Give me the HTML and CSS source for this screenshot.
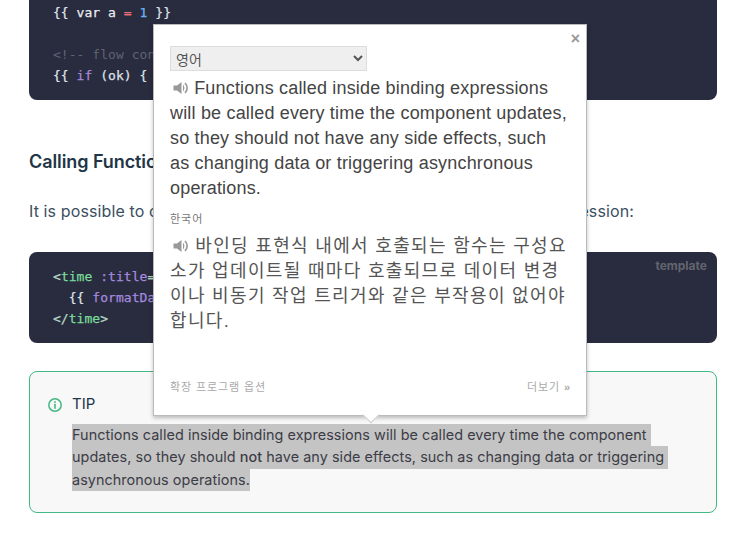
FILE: index.html
```html
<!DOCTYPE html>
<html lang="ko">
<head>
<meta charset="utf-8">
<title>Calling Functions</title>
<link rel="stylesheet" href="styles.css">
</head>
<body>
<main class="doc">
  <pre class="code code-top"><code>{{ <span class="kw-plain">var a</span> <span class="op">=</span> <span class="num">1</span> }}

<span class="comment">&lt;!-- flow control --&gt;</span>
{{ <span class="kw">if</span> (ok) { <span class="kw-plain">return message</span> } }}</code></pre>

  <h3 class="heading">Calling Functions</h3>
  <p class="para">It is possible to call a component-exposed method inside a binding expression:</p>

  <div class="code-wrap">
    <span class="lang">template</span>
    <pre class="code code-low"><code><span class="br">&lt;</span><span class="tag">time</span> <span class="kw">:title</span><span class="br">=</span><span class="str">"toTitleDate(date)"</span> <span class="kw">:datetime</span><span class="br">=</span><span class="str">"date"</span><span class="br">&gt;</span>
  {{ <span class="kw">formatDate</span>(date) }}
<span class="br">&lt;/</span><span class="tag">time</span><span class="br">&gt;</span></code></pre>
  </div>

  <aside class="tip">
    <svg class="tip-icon" width="14" height="14" viewBox="0 0 14 14" aria-hidden="true">
      <circle cx="7" cy="7" r="6.200" fill="none" stroke="#42b883" stroke-width="1.500"/>
      <rect x="6.200" y="3.200" width="1.600" height="1.600" fill="#42b883"/>
      <rect x="6.200" y="5.800" width="1.600" height="5" fill="#42b883"/>
    </svg>
    <div class="tip-body">
      <p class="tip-title">TIP</p>
      <p class="tip-text">
        <span class="sel sel-pad">Functions called inside binding expressions will be called every time the component</span>
        <span class="sel sel-pad">updates, so they should <strong class="strong">not</strong> have any side effects, such as changing data or triggering</span>
        <span class="sel">asynchronous operations.</span>
      </p>
    </div>
  </aside>
</main>

<section class="popup">
  <button class="close" type="button">×</button>
  <select class="lang-select"><option>영어</option></select>
  <p class="src">
    <svg class="speaker" width="16" height="14" viewBox="0 0 16 14" aria-hidden="true">
      <path d="M0.500 4.500h3.500L8.500 1v12L4 9.500H0.500z" fill="#999"/>
      <path d="M10 3.500c1.900 1.900 1.900 5.100 0 7z" fill="#999"/>
      <path d="M12 2c2.800 2.900 2.800 7.100 0 10" fill="none" stroke="#999" stroke-width="1.700"/>
    </svg>
    Functions called inside binding expressions will be called every time the component updates, so they should not have any side effects, such as changing data or triggering asynchronous operations.
  </p>
  <p class="target-label">한국어</p>
  <p class="target">
    <svg class="speaker" width="16" height="14" viewBox="0 0 16 14" aria-hidden="true">
      <path d="M0.500 4.500h3.500L8.500 1v12L4 9.500H0.500z" fill="#999"/>
      <path d="M10 3.500c1.900 1.900 1.900 5.100 0 7z" fill="#999"/>
      <path d="M12 2c2.800 2.900 2.800 7.100 0 10" fill="none" stroke="#999" stroke-width="1.700"/>
    </svg>
    바인딩 표현식 내에서 호출되는 함수는 구성요소가 업데이트될 때마다 호출되므로 데이터 변경이나 비동기 작업 트리거와 같은 부작용이 없어야 합니다.
  </p>
  <footer class="popup-foot">
    <span>확장 프로그램 옵션</span>
    <span>더보기 <span class="more">»</span></span>
  </footer>
  <span class="arrow"></span>
</section>
</body>
</html>
```
FILE: styles.css
```css
html, body { margin: 0; padding: 0; background: #fff; }
body {
  position: relative;
  height: 538px;
  overflow: hidden;
  font-family: Inter, "Noto Sans CJK KR", sans-serif;
  color: #213547;
}
.doc { padding: 0 29px; display: flex; flex-direction: column; }

.code {
  margin: 0;
  background: #292b3e;
  color: #dfe2ea;
  font: 13px/21px "DejaVu Sans Mono", monospace;
  letter-spacing: 0.04px;
  -webkit-text-stroke: 0.25px currentColor;
  padding: 14px 24px;
  border-radius: 8px;
  overflow: hidden;
}
.code code { font: inherit; }
.code-top { padding-top: 2px; padding-bottom: 14px; border-radius: 0 0 8px 8px; height: 84px; }
.code-low { height: 63px; }
.kw-plain { color: #eceef3; }
.op { color: #f07178; }
.num { color: #6cb0f0; }
.comment { color: #5f6474; -webkit-text-stroke: 0; }
.kw { color: #a58adf; }
.br { color: #b5d6c4; }
.tag { color: #79dc9b; }
.str { color: #a8d8a0; }

.heading {
  margin: 49px 0 0;
  font-size: 18px;
  line-height: 26px;
  font-weight: 600;
  letter-spacing: -0.08px;
}
.para {
  margin: 23px 0 0;
  font-size: 16px;
  line-height: 26px;
  letter-spacing: 0.115px;
  color: #3c4f5f;
}
.code-wrap { position: relative; margin-top: 28px; }
.lang {
  position: absolute;
  z-index: 1;
  top: 6px;
  right: 10px;
  font-size: 12px;
  line-height: 16px;
  font-weight: 700;
  color: #63656f;
}

.tip {
  margin-top: 28px;
  height: 140px;
  border: 1px solid #42b883;
  border-radius: 8px;
  background: #f8f8f8;
  display: flex;
  gap: 10px;
  padding: 0 0 0 18px;
}
.tip-icon { margin-top: 26px; flex: none; }
.tip-body { padding-top: 20px; }
.tip-title { margin: 0 0 8px; font-size: 15px; line-height: 24px; color: #213547; }
.tip-text { margin: 0; font-size: 14.4px; letter-spacing: 0.06px; line-height: 22.4px; color: #3c3c46; }
.sel { display: block; width: fit-content; background: #c4c4c4; white-space: nowrap; }
.sel-pad { padding-right: 4px; }
.strong { font-weight: 500; }

.popup {
  position: absolute;
  left: 153px;
  top: 24px;
  width: 399px;
  height: 349px;
  padding: 21px 17px 20px 16px;
  display: flex;
  flex-direction: column;
  background: #fff;
  border: 1px solid #bbb;
  box-shadow: 0 2px 4px rgba(0, 0, 0, 0.25);
  font-family: "Liberation Sans", "Noto Sans CJK KR", sans-serif;
  color: #444;
}
.close {
  position: absolute;
  top: 6px;
  right: 6px;
  padding: 0;
  border: 0;
  background: none;
  color: #999;
  font: bold 16px/16px "Liberation Sans", sans-serif;
}
.lang-select {
  width: 197px;
  height: 25px;
  flex: none;
  padding: 0 1px;
  border: 1px solid #ddd;
  border-radius: 0;
  background: #efefef;
  color: #555;
  font: 14px "Noto Sans CJK KR", sans-serif;
}
.src, .target { margin: 0; font-size: 18px; line-height: 25px; }
.src { margin-top: 5px; letter-spacing: 0.18px; }
.speaker { vertical-align: -1px; margin: 0 0 0 3px; }
.target-label { margin: 10px 0 0; font-size: 11px; line-height: 16px; letter-spacing: 1px; color: #777; }
.target { margin-top: 7px; letter-spacing: 1.33px; color: #555; }
.popup-foot {
  margin-top: auto;
  margin-right: -2px;
  display: flex;
  justify-content: space-between;
  font-size: 11px;
  line-height: 16px;
  letter-spacing: 0.9px;
  color: #aaa;
}
.more { font-size: 11px; font-weight: 700; }
.arrow {
  position: absolute;
  left: 211px;
  bottom: -6px;
  width: 12px;
  height: 12px;
  transform: rotate(45deg);
  background: #fff;
  border-right: 1px solid #ccc;
  border-bottom: 1px solid #ccc;
  box-sizing: border-box;
}
```
